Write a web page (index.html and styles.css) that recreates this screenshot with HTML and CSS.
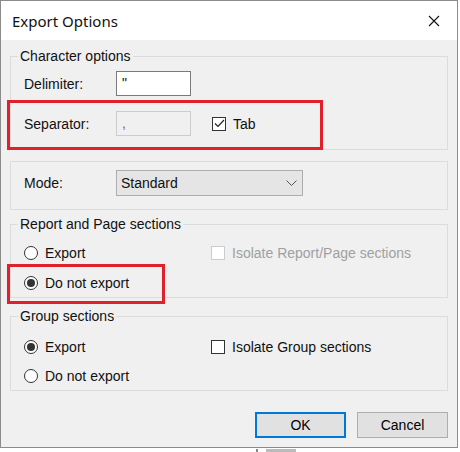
FILE: index.html
```html
<!DOCTYPE html>
<html lang="en">
<head>
  <meta charset="UTF-8">
  <title>Export Options</title>
  <link rel="stylesheet" href="styles.css">
</head>
<body>
  <div class="dialog">
    <div class="titlebar">
      <span class="title">Export Options</span>
      <span class="close">
        <svg width="12" height="12" viewBox="0 0 12 12"><path d="M1 1L11 11M11 1L1 11" stroke="#111" stroke-width="1.1" fill="none"/></svg>
      </span>
    </div>

    <div class="content">
      <fieldset class="group g-char">
        <legend>Character options</legend>
        <div class="row">
          <span class="lbl">Delimiter:</span>
          <span class="field">"</span>
        </div>
        <div class="row">
          <span class="lbl">Separator:</span>
          <span class="field disabled">,</span>
          <span class="opt col2"><span class="check checked"><svg width="11" height="9" viewBox="0 0 11 9"><path d="M1 4.5L4 7.5L10 1" stroke="#222" stroke-width="1.2" fill="none"/></svg></span>Tab</span>
        </div>
      </fieldset>

      <fieldset class="group g-mode">
        <div class="row">
          <span class="lbl">Mode:</span>
          <span class="select">Standard
            <svg width="11" height="6" viewBox="0 0 11 6"><path d="M0.5 0.5L5.5 5.5L10.5 0.5" stroke="#555" stroke-width="1" fill="none"/></svg>
          </span>
        </div>
      </fieldset>

      <fieldset class="group g-report">
        <legend>Report and Page sections</legend>
        <div class="row">
          <span class="opt"><span class="radio"></span>Export</span>
          <span class="opt col2 off"><span class="check"></span>Isolate Report/Page sections</span>
        </div>
        <div class="row">
          <span class="opt"><span class="radio on"></span>Do not export</span>
        </div>
      </fieldset>

      <fieldset class="group g-group">
        <legend>Group sections</legend>
        <div class="row">
          <span class="opt"><span class="radio on"></span>Export</span>
          <span class="opt col2"><span class="check"></span>Isolate Group sections</span>
        </div>
        <div class="row">
          <span class="opt"><span class="radio"></span>Do not export</span>
        </div>
      </fieldset>

      <div class="buttons">
        <button class="btn default">OK</button>
        <button class="btn">Cancel</button>
      </div>
    </div>

    <!-- red highlight boxes drawn over the form -->
    <div class="mark mark-sep"></div>
    <div class="mark mark-report"></div>
  </div>
  <div class="behind"><span class="tick"></span><span class="tick wide"></span></div>
</body>
</html>
```

FILE: styles.css
```css
* {
  box-sizing: border-box;
}

body {
  margin: 0;
  width: 460px;
  height: 452px;
  overflow: hidden;
  background: #fff;
  font-family: "Liberation Sans", Arial, sans-serif;
  font-size: 14px;
  color: #111;
}

.dialog {
  position: relative;
  width: 458px;
  height: 448px;
  border: 1px solid #8c8c8c;
  background: #f0f0f0;
}

.titlebar {
  height: 39px;
  background: #fff;
  display: flex;
  align-items: center;
  justify-content: space-between;
  padding-left: 11px;
}

.title {
  font-family: "Noto Sans", sans-serif;
  font-size: 15px;
  color: #111;
}

.close {
  width: 44px;
  height: 39px;
  display: flex;
  align-items: center;
  justify-content: center;
  margin-right: 1px;
}

.content {
  padding: 0 9px 0 9px;
}

.group {
  margin: 0;
  border: 1px solid #dcdcdc;
  padding: 0 12px;
  min-width: 0;
  display: flex;
  flex-direction: column;
}

.group legend {
  padding: 0 2px;
  margin-left: -5px;
  line-height: 16px;
  color: #111;
}

.g-char {
  margin-top: 8px;
  padding-top: 7px;
  padding-bottom: 13px;
  gap: 15px;
}

.g-mode {
  margin-top: 11px;
  padding-top: 8px;
  padding-bottom: 13px;
}

.g-report {
  margin-top: 6px;
  padding-top: 11px;
  padding-bottom: 4px;
  gap: 10px;
}

.g-group {
  margin-top: 10px;
  padding-top: 13px;
  padding-bottom: 4px;
  gap: 9px;
}

.row {
  display: flex;
  align-items: center;
  min-height: 20px;
}

.lbl {
  width: 93px;
  padding-left: 1px;
}

.field {
  width: 75px;
  height: 25px;
  border: 1px solid #7a7a7a;
  background: #fff;
  padding: 2px 5px;
  line-height: 18px;
}

.field.disabled {
  border-color: #cccccc;
  background: #f0f0f0;
  color: #6d6d6d;
}

.select {
  width: 187px;
  height: 26px;
  border: 1px solid #adadad;
  background: #e5e5e5;
  display: flex;
  align-items: center;
  justify-content: space-between;
  padding: 0 5px 0 4px;
}

.opt {
  display: flex;
  align-items: center;
}

.col2 {
  margin-left: auto;
  width: 224px;
}

.g-char .col2 {
  margin-left: 21px;
  width: auto;
}

.radio {
  width: 14px;
  height: 14px;
  border: 1px solid #333;
  border-radius: 50%;
  background: #fff;
  margin: 0 7px 0 1px;
  display: flex;
  align-items: center;
  justify-content: center;
}

.radio.on::after {
  content: "";
  width: 8px;
  height: 8px;
  border-radius: 50%;
  background: #333;
}

.check {
  width: 14px;
  height: 14px;
  border: 1px solid #333;
  background: #fff;
  margin-right: 7px;
  display: flex;
  align-items: center;
  justify-content: center;
}

.off {
  color: #a0a0a0;
}

.off .check {
  border-color: #cccccc;
}

.buttons {
  display: flex;
  justify-content: flex-end;
  gap: 11px;
  margin-top: 21px;
}

.btn {
  width: 91px;
  height: 26px;
  border: 1px solid #adadad;
  background: #e1e1e1;
  font-family: "Liberation Sans", Arial, sans-serif;
  font-size: 14px;
  color: #000;
  padding: 0;
}

.btn.default {
  border: 2px solid #0078d7;
}

.mark {
  position: absolute;
  border: 3px solid #e0202a;
}

.mark-sep {
  left: 6px;
  top: 99px;
  width: 316px;
  height: 50px;
}

.mark-report {
  left: 6px;
  top: 263px;
  width: 158px;
  height: 40px;
}

/* window underneath the dialog */
.behind {
  display: flex;
  gap: 8px;
  padding: 1px 0 0 256px;
}

.tick {
  width: 2px;
  height: 3px;
  background: #888;
}

.tick.wide {
  width: 30px;
  background: #bbb;
}
```
